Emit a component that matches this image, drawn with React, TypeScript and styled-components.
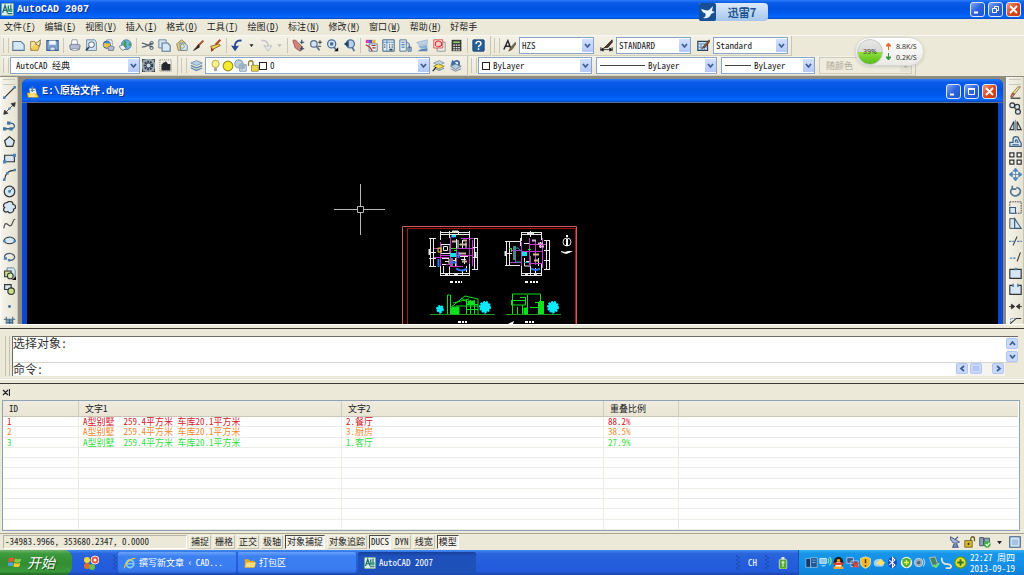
import React from 'react';
import styled, { createGlobalStyle, css } from 'styled-components';

const GlobalStyle = createGlobalStyle`
  * { box-sizing: border-box; }
  body { margin: 0; background: #ece9d8; }
  button, input, select { font: inherit; color: inherit; margin: 0; border-radius: 0; }
  button { padding: 0; border: 0; background: none; }
`;

const Page = styled.div`
  position: relative;
  display: flex;
  flex-direction: column;
  height: 100vh;
  min-height: 480px;
  overflow: hidden;
  background: #ece9d8;
  color: #1c1c1c;
  font: 9px/12px "Noto Sans Mono CJK SC", "Noto Sans CJK SC", monospace;
`;

/* ---------- title bars ---------- */

const blueBar = css`
  background: linear-gradient(#2a7cf4 0, #0a5bea 15%, #0053e0 45%, #0059ee 70%, #0668fb 90%, #0347c4 100%);
  color: #fff;
  font: bold 10px/14px "Liberation Mono", "Noto Sans CJK SC", monospace;
  text-shadow: 1px 1px 0 #0a2f86;
  display: flex;
  align-items: center;
`;

const AppBar = styled.header`
  ${blueBar}
  height: 19px;
  flex: none;
  padding: 0 3px 0 1px;
  gap: 3px;
`;

const BarTitle = styled.h1`
  margin: 0;
  flex: 1;
  font: inherit;
  white-space: pre;
`;

const WinButtons = styled.div`
  display: flex;
  gap: 3px;
`;

const WinButton = styled.button<{ $close?: boolean }>`
  width: 15px;
  height: 15px;
  border: 1px solid #dce6fb;
  border-radius: 3px;
  background: ${p => (p.$close
    ? 'linear-gradient(135deg, #f09a7c, #dc4a20 50%, #c43a12)'
    : 'linear-gradient(135deg, #7fa6f6, #2c62de 50%, #2154cc)')};
  display: grid;
  place-items: center;
`;

/* ---------- menu ---------- */

const MenuBar = styled.nav`
  flex: none;
  display: flex;
  gap: 9px;
  height: 17px;
  padding: 0 4px;
  align-items: center;
  border-bottom: 1px solid #f8f7f0;
`;

const MenuItem = styled.button`
  white-space: nowrap;
  line-height: 14px;
  u { text-underline-offset: 1px; }
`;

/* ---------- toolbars ---------- */

const ToolRow = styled.div`
  flex: none;
  display: flex;
  height: 20px;
  padding-left: 1px;
`;

const Toolbar = styled.div<{ $gap?: number }>`
  display: flex;
  align-items: center;
  gap: ${p => p.$gap || 0}px;
  padding: 0 3px 0 9px;
  position: relative;
  background: linear-gradient(#f4f2e8, #ebe8d7);
  border-right: 1px solid #c8c5b4;
  border-bottom: 1px solid #d2cfbf;
  margin-right: 1px;
  &::before {
    content: "";
    position: absolute;
    left: 2px;
    top: 2px;
    bottom: 2px;
    width: 4px;
    border: solid #cbc8b8;
    border-width: 0 1px;
  }
`;

const ToolButton = styled.button<{ $narrow?: boolean }>`
  width: ${p => (p.$narrow ? 11 : 17)}px;
  height: 17px;
  flex: none;
  display: grid;
  place-items: center;
`;

const StyleField = styled.div`
  display: flex;
  gap: 1px;
`;

const Divider = styled.i`
  width: 1px;
  height: 15px;
  margin: 0 2px;
  background: #cbc8b8;
`;

const Combo = styled.label<{ $w: number; $off?: boolean }>`
  position: relative;
  display: block;
  width: ${p => p.$w}px;
  height: 17px;
  background: ${p => (p.$off ? '#efecdd' : '#fff')};
  border: 1px solid ${p => (p.$off ? '#cfccbb' : '#8ba6c4')};
  color: ${p => (p.$off ? '#aca899' : '#1c1c1c')};
`;

const ComboSelect = styled.select<{ $pad: number }>`
  appearance: none;
  width: 100%;
  height: 15px;
  padding: 0 13px 0 ${p => p.$pad}px;
  border: 0;
  background: transparent;
  line-height: 14px;
  opacity: 1;
`;

const ComboArt = styled.span`
  position: absolute;
  left: 3px;
  top: 0;
  height: 15px;
  display: flex;
  align-items: center;
  pointer-events: none;
`;

const ComboArrow = styled.span<{ $off?: boolean }>`
  position: absolute;
  right: 0;
  top: 1px;
  width: 11px;
  height: 13px;
  background: ${p => (p.$off ? '#e6e3d4' : 'linear-gradient(#d3e0ff, #b4c9f8)')};
  display: grid;
  place-items: center;
  pointer-events: none;
`;

const Swatch = styled.i`
  width: 8px;
  height: 8px;
  border: 1px solid #222;
  background: #fff;
`;

const Stroke = styled.i<{ $w: number }>`
  width: ${p => p.$w}px;
  height: 1px;
  background: #444;
`;

/* ---------- work area ---------- */

const WorkArea = styled.main`
  flex: 1;
  min-height: 0;
  display: flex;
  border-top: 1px solid #8f8c80;
`;

const Dock = styled.aside`
  width: 18px;
  flex: none;
  overflow: hidden;
  padding-top: 7px;
  background: linear-gradient(90deg, #f6f4ec, #e6e3d2);
  border-right: 1px solid #c8c5b4;
  border-left: 1px solid #fbfaf5;
  position: relative;
  &::before {
    content: "";
    position: absolute;
    left: 2px;
    right: 2px;
    top: 2px;
    height: 4px;
    border: solid #cbc8b8;
    border-width: 1px 0;
  }
`;

const DockList = styled.div`
  display: grid;
  grid-auto-rows: 1fr;
  height: calc(100% + 7px);
  button { display: grid; place-items: center; min-height: 0; }
`;

const MdiHost = styled.div`
  flex: 1;
  min-width: 0;
  display: flex;
  padding: 2px 3px 0 4px;
  background: #8c8a82;
`;

const MdiWindow = styled.section`
  flex: 1;
  min-width: 0;
  display: flex;
  flex-direction: column;
  border: solid #0b48d2;
  border-width: 0 5px;
  border-radius: 6px 6px 0 0;
  background: #0b48d2;
`;

const MdiBar = styled.header`
  ${blueBar}
  height: 24px;
  flex: none;
  margin: 0 -5px;
  padding: 2px 6px 0 5px;
  gap: 3px;
  border-radius: 6px 6px 0 0;
  border-bottom: 1px solid #5a6f9a;
`;

const Canvas = styled.svg`
  display: block;
  flex: 1;
  min-height: 0;
  width: 100%;
  background: #000;
`;

/* ---------- command line ---------- */

const CommandArea = styled.section`
  flex: none;
  display: flex;
  padding: 7px 6px 7px 5px;
  margin-top: 4px;
  border-top: 1px solid #3c3a34;
  border-bottom: 1px solid #3c3a34;
  box-shadow: 0 -3px 0 #ece9d8, 0 -4px 0 #fff, inset 0 -3px 0 #ece9d8, inset 0 -4px 0 #fff;
  font-size: 12px;
  line-height: 12px;
  color: #333;
`;

const CommandGrip = styled.i`
  width: 5px;
  margin-right: 2px;
  border: solid #c4c1b0;
  border-width: 0 1px;
`;

const CommandBox = styled.div`
  flex: 1;
  border-left: 1px solid #6e6c64;
  border-top: 1px solid #6e6c64;
`;

const History = styled.div`
  display: flex;
  justify-content: space-between;
  height: 26px;
  background: #fff;
  border-bottom: 1px solid #d4d4d0;
`;

const Prompt = styled.div`
  display: flex;
  height: 13px;
  margin-right: 13px;
  background: #fff;
  input { flex: 1; min-width: 0; border: 0; padding: 0; background: none; outline: 0; height: 13px; }
`;

const Scroll = styled.div<{ $row?: boolean }>`
  display: flex;
  flex-direction: ${p => (p.$row ? 'row' : 'column')};
  gap: 2px;
  background: #f5f4ee;
  width: ${p => (p.$row ? 50 : 12)}px;
  padding: ${p => (p.$row ? '0 1px' : '1px 0')};
`;

const ScrollButton = styled.button<{ $end?: boolean }>`
  flex: none;
  width: 12px;
  height: 11px;
  border: 1px solid #b2c6f3;
  border-radius: 2px;
  background: #c9d8fd;
  display: grid;
  place-items: center;
  margin-left: ${p => (p.$end ? 'auto' : '0')};
`;

/* ---------- result list ---------- */

const ResultPanel = styled.section`
  flex: none;
  padding: 0 4px 2px 2px;
`;

const ClosePanel = styled.button`
  display: grid;
  place-items: center;
  width: 8px;
  height: 16px;
`;

const ListBox = styled.div`
  height: 131px;
  border: 1px solid #8fa3b8;
  background: #fff;
  padding-right: 1px;
`;

const Table = styled.table`
  width: 100%;
  height: 100%;
  table-layout: fixed;
  border-collapse: separate;
  border-spacing: 0;
  text-align: left;
  thead tr { height: 16px; }
  tbody tr { height: 10px; }
  th {
    padding: 0 0 0 6px;
    font-weight: 400;
    line-height: 14px;
    background: linear-gradient(#efecdf, #e9e6d5);
    border-right: 1px solid #d0cdbd;
    border-bottom: 1px solid #c9c6b6;
  }
  td {
    height: 10px;
    padding: 0 0 0 4px;
    line-height: 9px;
    border-right: 1px solid #ecebe6;
    border-bottom: 1px solid #ecebe6;
    white-space: pre;
  }
  th:last-child, td:last-child { border-right: 0; }
`;

const ResultRow = styled.tr<{ $color?: string }>`
  color: ${p => p.$color || 'inherit'};
`;

/* ---------- status bar ---------- */

const StatusBar = styled.footer`
  flex: none;
  display: flex;
  align-items: center;
  gap: 2px;
  height: 17px;
  padding: 0 3px;
  border-top: 1px solid #a9a698;
`;

const Coordinates = styled.output`
  width: 184px;
  height: 14px;
  padding-left: 1px;
  border: 1px solid;
  border-color: #b8b5a5 #fff #fff #b8b5a5;
`;

const Toggle = styled.button<{ $on?: boolean }>`
  height: 14px;
  padding: 0 1px;
  line-height: 12px;
  border: 1px solid;
  border-color: ${p => (p.$on ? '#4a4840 #fff #fff #4a4840' : '#f6f4ea #c4c1b1 #c4c1b1 #f6f4ea')};
  background: ${p => (p.$on ? '#f4f2ea' : 'transparent')};
`;

const StatusTray = styled.div`
  margin-left: auto;
  display: flex;
  align-items: center;
  height: 14px;
  gap: 2px;
  button { display: grid; place-items: center; width: 13px; height: 13px; }
`;

/* ---------- taskbar ---------- */

const Taskbar = styled.footer`
  flex: none;
  display: flex;
  height: 25px;
  align-items: stretch;
  color: #fff;
  background: linear-gradient(#3f8cf3 0, #2a65dc 14%, #245edb 50%, #235adb 85%, #1b45a8 100%);
`;

const StartButton = styled.button`
  width: 72px;
  display: flex;
  align-items: center;
  gap: 5px;
  padding: 0 0 2px 8px;
  border-radius: 0 8px 8px 0;
  background: linear-gradient(#6fb56c 0, #3c9a3c 15%, #338d33 55%, #3a9a3a 85%, #206a20 100%);
  font: italic 14px/20px "Noto Sans CJK SC", sans-serif;
  text-shadow: 1px 1px 1px #1c4d1c;
`;

const QuickLaunch = styled.div`
  display: flex;
  align-items: center;
  justify-content: space-between;
  width: 42px;
  margin-left: 3px;
  padding-left: 8px;
`;

const TaskButton = styled.button<{ $active?: boolean }>`
  flex: 0 1 118px;
  height: 21px;
  margin: 2px 1px 0;
  padding: 0 6px;
  display: flex;
  align-items: center;
  gap: 3px;
  border-radius: 2px;
  white-space: nowrap;
  background: ${p => (p.$active
    ? 'linear-gradient(#173f9c, #1e51bb 20%, #1e50b8)'
    : 'linear-gradient(#6aa3fa, #3c80f2 20%, #3a7cf0 85%, #2f68d6)')};
`;

const Language = styled.div`
  margin-left: auto;
  display: flex;
  align-items: center;
  gap: 8px;
  width: 62px;
`;

const Tray = styled.div`
  flex: 0 0 226px;
  display: flex;
  align-items: center;
  padding-left: 6px;
  background: linear-gradient(#35b3f4 0, #1795e8 14%, #128fe6 60%, #0f7fd4 100%);
  border-left: 1px solid #1b52a8;
`;

const TrayIcons = styled.div`
  display: flex;
  flex: 1;
  justify-content: space-between;
  padding-right: 3px;
  button { width: 13px; height: 16px; display: grid; place-items: center; }
`;

const Clock = styled.time`
  width: 54px;
  line-height: 11px;
  white-space: pre;
`;

/* ---------- floating widgets ---------- */

const ThunderBadge = styled.a`
  position: absolute;
  top: 3px;
  right: 256px;
  width: 69px;
  height: 18px;
  display: flex;
  align-items: center;
  border-radius: 2px 4px 4px 2px;
  background: linear-gradient(#dbe9fb, #a5c6ee);
  color: #1f5390;
  font: bold 11px/16px "Noto Sans CJK SC", sans-serif;
  text-decoration: none;
  span { flex: 1; text-align: center; }
`;

const NetMonitor = styled.aside`
  position: absolute;
  top: 37px;
  right: 100px;
  width: 69px;
  height: 29px;
  display: flex;
  align-items: center;
  gap: 3px;
  padding-left: 1px;
  border-radius: 15px;
  background: linear-gradient(#fff, #e9e9e6);
  border: 1px solid #d8d8d2;
  box-shadow: 0 1px 3px #8885;
  font: 7px/11px "Noto Sans", sans-serif;
  color: #333;
`;

const Gauge = styled.div`
  width: 26px;
  height: 26px;
  border-radius: 50%;
  border: 1px solid #c4c8c0;
  background: linear-gradient(#e9e9e9 0, #d8d9d6 48%, #8fe33c 50%, #58b81c 100%);
  display: grid;
  place-items: center;
`;

const Speeds = styled.div`
  div { display: flex; align-items: center; gap: 5px; white-space: nowrap; }
`;

/* ---------- icon drawings (16 unit grid) ---------- */

const D = '#24425f';
const B = '#4f86b8';
const L = '#d5e6f5';

const icons: Record<string, React.ReactNode> = {
  cad: <><rect width="16" height="16" fill="#d9efe9" /><path d="M0 0h16v16H0z" fill="none" stroke="#2d6a6a" strokeWidth="1.5" /><path d="M2 12 5 3l3 9M3.500 9h3M9 3v7M12 2v9M8 13h6" stroke="#1f6c6c" strokeWidth="1.600" fill="none" /><path d="M9 7h5v4H9z" fill="#3aa089" /></>,
  dwg: <><path d="M0 9h12l4 6H1z" fill="#f5c62c" stroke="#8d6c10" strokeWidth=".6" /><path d="M3 3h8l2 7H4z" fill="#e9eef4" /><path d="M7 0v8M3 3h8M5 6h5" stroke="#5b86b6" strokeWidth="1.600" /><path d="M4 10c3-3 6 3 9 3v2H2z" fill="#ffe27a" /></>,
  new: <path d="M1 3h10l4 4v7H1z" fill={L} stroke="#58788f" strokeWidth="1.300" />,
  open: <><path d="M2 14 5 5h9l-3 9z" fill="#f3cf5b" stroke="#96762a" /><path d="M2 13V3h5l1 2" fill="#f8e6a4" stroke="#96762a" /><path d="M8 6l6-5-1 8z" fill="#fbf3cf" stroke="#7b6426" /></>,
  save: <><path d="M1 2h14v12H1z" fill="#7fa5cf" stroke="#3d5f8b" strokeWidth="1.300" /><path d="M4 2h8v5H4z" fill="#f1f6fb" /><path d="M5 10h6v4H5z" fill="#dfe7f1" stroke="#3d5f8b" strokeWidth=".7" /></>,
  print: <><path d="M4 7 5 1h6l1 6" fill="#fff" stroke="#7b8797" /><path d="M2 8c0-2 12-2 13 0l-1 5H3z" fill="#b6bdd2" stroke="#626b85" /><path d="M5 12h7v2H5z" fill="#fff" stroke="#626b85" strokeWidth=".7" /></>,
  preview: <><path d="M2 1h10l2 3v10H2z" fill={L} stroke="#58788f" /><circle cx="8" cy="7" r="3.500" fill="#fff" stroke={D} /><path d="m5 10-4 4" stroke={D} strokeWidth="2" /></>,
  publish: <><path d="M4 6 6 1h6l1 6" fill="#fff" stroke="#7b8797" /><circle cx="6" cy="7" r="4.500" fill="#4d93d8" stroke="#2d5a94" /><path d="M2 6c2-2 5 1 8-1v5c-2 2-5 1-8-1z" fill="#f0c434" /><path d="M7 10c1-2 7-2 8 0l-1 4H8z" fill="#b6bdd2" stroke="#626b85" /></>,
  globe: <><circle cx="9" cy="7" r="6" fill="#6fb4e6" stroke="#42688c" /><path d="M6 3c3-2 4 1 3 3s2 3 0 5c-3 0-4-4-3-8zM12 4l3 3-3 2z" fill="#3da04a" /><path d="m0 9 5-2 4 5-5 2z" fill="#eef4fa" stroke="#58788f" /></>,
  cut: <><path d="M1 5c4 0 7 3 13 5M1 10c5 0 8-3 13-5" stroke="#5b6470" strokeWidth="1.500" fill="none" /><circle cx="13" cy="5" r="2" fill="none" stroke={D} /><circle cx="13" cy="11" r="2" fill="none" stroke={D} /></>,
  copy: <><path d="M1 1h9v10H1z" fill={L} stroke="#58788f" /><path d="M5 5h7l3 3v7H5z" fill={L} stroke="#58788f" strokeWidth="1.300" /></>,
  paste: <><path d="M2 6 8 1l5 4-1 9H4z" fill="#e0cb8c" stroke="#8e7a43" /><path d="M6 5h6l3 3v6H7z" fill={L} stroke="#58788f" /><circle cx="9" cy="9" r="2.500" fill="none" stroke="#8e9a53" /></>,
  brush: <><path d="M14 2 7 9" stroke="#a2542d" strokeWidth="2.500" /><path d="M8 7 2 14l7-4z" fill="#2b2523" stroke="#2b2523" /></>,
  match: <><path d="m2 9 10-3 2 2-10 5z" fill="#f6d44a" stroke="#6b5320" /><path d="m14 1-6 6" stroke="#b64923" strokeWidth="2.500" /><path d="M3 11v4l3-2" fill="#bb4822" stroke="#76310f" /></>,
  undo: <><path d="M13 2C7 1 4 5 5 10" fill="none" stroke="#27488f" strokeWidth="2.300" /><path d="M0 8l5 7 5-7-4 1z" fill="#27488f" /></>,
  redo: <><path d="M3 2c6-1 9 3 8 8" fill="none" stroke="#c3c4c6" strokeWidth="2" /><path d="M16 8l-5 7-5-7 4 1z" fill="#e8e8e6" stroke="#b9babd" /></>,
  caret: <path d="M5 6h6L8 10z" fill="#222" />,
  caretOff: <path d="M5 6h6L8 10z" fill="#b9b7ab" />,
  pan: <><path d="M1 2c3-2 5 1 7 3l5 5-3 5-6-4z" fill="#d4837c" stroke="#8e4b49" /><path d="M12 1v5M10 4h5M12 9v5M15 12h-5" stroke={D} strokeWidth="1.300" /></>,
  zoom: <><circle cx="6" cy="6" r="4" fill={L} stroke="#587089" strokeWidth="1.500" /><path d="m9 9 4 5" stroke="#587089" strokeWidth="2" /><path d="M11 4h5M13.500 1.500v5M11 9h4" stroke="#222" /></>,
  zoomWin: <><circle cx="7" cy="6" r="5" fill={L} stroke="#466a92" strokeWidth="1.500" /><path d="M5 4h4v4H5z" fill="#4e6f93" /><path d="m10 10 2 3" stroke="#466a92" strokeWidth="2" /><path d="M15 10v5h-5z" fill="#111" /></>,
  zoomPrev: <><circle cx="9" cy="6" r="5" fill="#b8d2ea" stroke="#466a92" strokeWidth="1.500" /><path d="M1 6l6-4v8z" fill="#24425f" /><path d="m11 10 3 5" stroke="#466a92" strokeWidth="2" /></>,
  props: <><path d="M1 1h4v4H1z" fill="#e33aa8" /><path d="M5 1h4v4H5z" fill="#3a60e3" /><path d="M9 1h4v4H9z" fill="#f0b32a" /><path d="M5 6h10v9H5z" fill="#e6eef6" stroke="#5b6f8a" /><path d="m1 7 5 3 3 5M8 8h5M9 11h4" stroke="#a63b3b" strokeWidth="1.500" fill="none" /></>,
  design: <><path d="M1 1h14v14H1z" fill="#e4eef6" stroke={D} /><path d="M6 1v14M1 4h14" stroke={B} /><path d="M3 7h1M3 10h1M9 7h1M12 7h1M9 10h1M12 10h1M9 13h4" stroke={D} strokeWidth="2" /></>,
  palette: <><path d="M1 1h8v14H1z" fill="#dfeaf5" stroke="#4a6a8e" /><path d="M3 4h4M3 7h4M3 10h4" stroke={B} strokeWidth="1.500" /><path d="M9 4c5 0 4 5 4 9M11 10h4v5h-4z" stroke="#3d5b82" fill="#b9cce2" /></>,
  sheets: <><path d="M1 4 14 1v5L4 8z" fill="#b9d3ea" stroke="#88a" strokeWidth=".5" /><path d="m3 9 11-2v4L6 12z" fill="#8ab2d6" /><path d="m5 13 9-2v4H2z" fill="#5788b7" /></>,
  markup: <><path d="M5 4h10v11H5z" fill="#eee" stroke="#888" /><path d="M1 1h11v10H1z" fill="#fff" stroke="#c33" /><path d="M3 4c2-2 6-2 7 0s1 4-1 5-5 0-6-1 1-3 0-4z" fill="#f7c9c9" stroke="#d22c2c" strokeWidth="1.300" /></>,
  calc: <><path d="M2 1h12v14H2z" fill="#3a3a3a" /><path d="M4 3h8v2H4z" fill="#8fd06a" /><path d="M4 7.500h8M4 10.500h8M4 13.500h8" stroke="#f1f1f1" strokeWidth="1.500" strokeDasharray="2 1" /></>,
  help: <><rect x="1" y="1" width="14" height="14" rx="1" fill="#275f9a" stroke="#173c66" /><path d="M5 6c0-4 6-4 6-.5C11 8 8 8 8 10M8 11.500v2" stroke="#fff" strokeWidth="1.800" fill="none" /></>,
  textStyle: <><path d="M1 13 6 2l4 11M3 9h5" stroke="#222" strokeWidth="1.700" fill="none" /><path d="m15 4-6 7-2 4 4-2 5-7z" fill="#7c6a50" stroke="#3b3222" strokeWidth=".6" /></>,
  dimStyle: <><path d="M15 1 8 8l-3 3 5-1 5-6z" fill="#4b3a29" stroke="#2a2118" /><path d="M1 13h14M1 10v5M15 10v5M1 13l3-2v4zM15 13l-3-2v4z" stroke="#222" fill="#222" /></>,
  tableStyle: <><path d="M1 3h12v11H1z" fill="#cfe0f1" stroke={D} strokeWidth="1.400" /><path d="M1 6h12M5 6v8M9 6v8M1 10h12" stroke={B} /><path d="m15 1-7 8-2 3 4-2 6-7z" fill="#8f5133" stroke="#402111" strokeWidth=".6" /></>,
  gear: <><path d="M0 0h16v16H0z" fill="#9aa7b3" /><path d="M0 4V0h4M12 0h4v4M16 12v4h-4M4 16H0v-4" stroke="#222" strokeWidth="1.500" fill="none" /><circle cx="8" cy="8" r="4.500" fill="none" stroke="#2c3d4d" strokeWidth="3" strokeDasharray="2 1.200" /><circle cx="8" cy="8" r="3" fill="#cbd6df" stroke="#2c3d4d" /></>,
  myspace: <><path d="M1 1h14v14H1z" fill="none" stroke="#555" strokeDasharray="1 1.500" /><path d="M3 7 6 4h2V2l3 4h3v8H3z" fill="#26282b" /></>,
  layers: <><path d="m1 5 7-3 7 3-7 3z" fill="#b9cfe2" stroke="#6f8fb0" /><path d="m1 8 7 3 7-3M1 11l7 3 7-3" fill="none" stroke="#6f8fb0" strokeWidth="1.700" /></>,
  layerPrev: <><path d="m2 5 7-3 6 3-7 3z" fill="#c3d3e2" stroke="#7893ad" /><path d="m2 9 6-3 7 3-7 3z" fill="#f6e04a" stroke="#8e8030" /><path d="M4 12l5 2 6-3" fill="none" stroke="#7893ad" strokeWidth="1.500" /><path d="M1 15l4-5" stroke="#222" strokeWidth="1.500" /></>,
  layerState: <><path d="m2 9 6-3 7 3-7 4z" fill="#b7cbe0" stroke="#55708e" /><path d="m2 12 6 3 7-3" fill="none" stroke="#55708e" /><path d="M12 8c2-6-3-7-6-4" fill="none" stroke="#3c6aa2" strokeWidth="2.200" /><path d="M9 6 2 8l2-7z" fill="#3c6aa2" /></>,
  bulb: <><circle cx="8" cy="6" r="4.500" fill="#fdf28a" stroke="#a9983c" /><path d="M6 11h4v4H6z" fill="#a8a8a0" /></>,
  sun: <circle cx="8" cy="8" r="6.500" fill="#f4ec2c" stroke="#98902a" strokeWidth="1.500" />,
  freeze: <><circle cx="6" cy="6" r="5" fill="#bcd0de" stroke="#6e8698" /><path d="M7 7h8v8H7z" fill="#dde9f0" stroke="#6e8698" /><circle cx="10" cy="9" r="4" fill="#9ab2c4" /></>,
  lock: <><path d="M2 8V4c0-4 6-4 6 0v3" fill="none" stroke="#8b7f34" strokeWidth="1.800" /><path d="M6 7h9v8H6z" fill="#e9d74c" stroke="#8b7f34" /></>,
  line: <><path d="m2 14 12-12" stroke="#333" strokeWidth="1.500" /><path d="M0 13h3v3H0zM13 0h3v3h-3z" fill={B} /></>,
  xline: <><path d="M1 15 15 1M1 15l1-5 4 4zM15 1l-5 1 4 4z" stroke="#333" fill="#333" /><circle cx="8" cy="8" r="1.500" fill={B} /></>,
  pline: <><path d="M1 12h9c6 0 5-7-1-7H7" stroke="#3a6488" strokeWidth="1.600" fill="none" /><path d="M0 10h4v4H0zM8 10h4v4H8zM5 3h4v4H5z" fill="#3f76a4" /></>,
  polygon: <path d="m8 2 6 5-2 7H4L2 7z" fill={L} stroke="#333" strokeWidth="1.500" />,
  rect: <><path d="M2 4h12v8H2z" fill={L} stroke="#333" strokeWidth="1.400" /><path d="M0 10h4v4H0zM12 2h4v4h-4z" fill={B} /></>,
  arc: <><path d="M2 14C3 7 7 3 14 3" stroke="#333" fill="none" strokeWidth="1.400" /><path d="M0 13h3v3H0zM4 5h3v3H4zM13 1h3v3h-3z" fill={B} /></>,
  circle: <><circle cx="8" cy="8" r="6.500" fill={L} stroke="#333" strokeWidth="1.500" /><path d="m8 8 4-4" stroke="#333" /><circle cx="8" cy="8" r="1.800" fill={B} /></>,
  cloud: <path d="M5 2c3-3 8-1 7 2 5 1 4 6 1 6 1 4-5 6-7 3-4 2-7-2-4-5-3-2-1-6 3-6z" fill={L} stroke="#333" strokeWidth="1.500" />,
  spline: <path d="M1 14C3 0 8 16 11 9S13 3 15 3" stroke="#555" strokeWidth="1.500" fill="none" />,
  ellipse: <><ellipse cx="8" cy="8" rx="6.500" ry="4" fill={L} stroke="#333" strokeWidth="1.500" /><path d="M0 7h3v3H0zM13 7h3v3h-3zM7 3h3v2H7z" fill={B} /></>,
  ellArc: <><path d="M3 11C-1 5 8 2 13 6c4 4-2 8-6 6" fill="none" stroke="#4a6076" strokeWidth="1.600" /><path d="M1 9h4v3H1zM6 11h3v3H6z" fill={B} /></>,
  insert: <><path d="M5 1h8l2 3v7H5z" fill={L} stroke="#58788f" /><path d="M2 5h8v7H2z" fill="#c9e08a" stroke="#333" strokeWidth="1.300" /><circle cx="9" cy="11" r="3.500" fill="#d8ecb0" stroke="#333" strokeWidth="1.300" /><path d="M16 11v5h-5z" fill="#111" /></>,
  block: <><path d="M2 2h8v6H2z" fill={L} stroke="#333" strokeWidth="1.400" /><circle cx="10" cy="10" r="4" fill="#c9e08a" stroke="#333" strokeWidth="1.400" /></>,
  point: <circle cx="8" cy="8" r="1.800" fill="#3f76a4" />,
  hatch: <path d="M1 4h14M1 12h14M4 1v14M12 1v14M5 6h7M5 8h7M5 10h7M8 4v8" stroke="#3f6585" strokeWidth="1.300" />,
  erase: <><path d="m14 1-7 9-3-1 7-8z" fill="#f1e4a0" stroke="#7d6f35" /><path d="m7 10-3-1-2 4 2 1z" fill="#d67c6a" stroke="#7d3f35" /><path d="M2 15h12" stroke="#333" strokeWidth="1.500" /></>,
  copyObj: <><circle cx="4" cy="4" r="3" fill={L} stroke="#333" strokeWidth="1.400" /><circle cx="10" cy="6" r="3" fill={L} stroke="#333" strokeWidth="1.400" /><circle cx="11" cy="12" r="3" fill={L} stroke="#333" strokeWidth="1.400" /></>,
  mirror: <><path d="M6 3v10H1zM10 3v10h5z" fill={L} stroke="#333" strokeWidth="1.400" /><path d="M8 1v14" stroke={B} /></>,
  offset: <><path d="M1 14V9h4V5c0-4 7-4 7 0l3 5v4z" fill={L} stroke="#3a5a7a" strokeWidth="1.400" /><path d="M4 12h8M8 9c-1-4 3-4 2 0h2" fill="none" stroke="#3a5a7a" strokeWidth="1.300" /></>,
  array: <path d="M1 1h5v5H1zM10 1h5v5h-5zM1 10h5v5H1zM10 10h5v5h-5z" fill="#f4f4f0" stroke="#333" strokeWidth="1.500" />,
  move: <path d="M8 2v12M2 8h12M8 0 5 4h6zM8 16l-3-4h6zM0 8l4-3v6zM16 8l-4-3v6z" fill={B} stroke={B} />,
  rotate: <path d="M4 4c-5 6 1 11 6 9s6-9-1-10M4 1v4h5" fill="none" stroke="#527596" strokeWidth="2" />,
  scale: <><path d="M1 1h14v14H1z" fill="none" stroke="#333" strokeDasharray="2 1" /><path d="M1 8h7v7H1z" fill={L} stroke="#3a5a7a" strokeWidth="1.300" /></>,
  stretch: <><path d="M1 2h6v12H1z" fill={L} stroke="#333" /><path d="m7 2 8 12H7z" fill={L} stroke="#3a5a7a" strokeWidth="1.300" /></>,
  trim: <><path d="M0 9h6M10 9h6" stroke={B} strokeWidth="1.500" strokeDasharray="3 1" /><path d="M5 14 10 3" stroke="#333" strokeWidth="1.300" /></>,
  extend: <><path d="M1 10h8" stroke={B} strokeWidth="1.500" strokeDasharray="3 1" /><path d="m10 14 4-11" stroke="#333" strokeWidth="1.300" /></>,
  breakPt: <><path d="M1 3h14v11H1z" fill={L} stroke="#333" strokeWidth="1.400" /><path d="M7 1h3v3H7z" fill={B} /></>,
  breakObj: <><path d="M5 3H1v11h14V3h-4" fill={L} stroke="#333" strokeWidth="1.400" /><path d="M4 1h2v4H4zM10 1h2v4h-2z" fill={B} /></>,
  join: <path d="M0 8h6M10 8h6M7 8 3 5v6zM9 8l4-3v6z" fill="#333" stroke="#333" />,
  chamfer: <><path d="M2 15V9l7-6h6" fill="none" stroke="#333" strokeWidth="1.300" /><path d="M2 8V3h6" fill="none" stroke={B} strokeDasharray="2 1" /></>,
  flag: <><path d="M1 4c3-2 4-1 6 0L6 8C4 7 3 7 0 8z" fill="#f0562a" /><path d="M8 4c3 1 4 1 7 0l-1 4c-3 1-4 1-7 0z" fill="#8ccc3c" /><path d="M0 9c3-1 4-1 6 0l-1 4c-2-1-3-1-6 0z" fill="#4aa2f0" /><path d="M7 9c3 1 4 1 7 0l-1 4c-3 1-4 1-7 0z" fill="#f8ca32" /></>,
  quick: <><circle cx="4" cy="5" r="3" fill="#f5d63a" /><circle cx="4" cy="11" r="3" fill="#e86a2a" /><circle cx="9" cy="12" r="3" fill="#6ac04a" /><circle cx="12" cy="5" r="4" fill="#e8563a" stroke="#f7e6dc" /><circle cx="12" cy="5" r="1.500" fill="#fff" /></>,
  ie: <><circle cx="8" cy="9" r="5" fill="none" stroke="#7fd0fa" strokeWidth="2.500" /><path d="M4 9h9" stroke="#7fd0fa" strokeWidth="1.800" /><path d="M1 15C-1 11 9 1 15 2" fill="none" stroke="#f3c634" strokeWidth="1.500" /></>,
  folder: <><path d="M1 3h5l2 2h6v9H1z" fill="#e0ac30" /><path d="M3 7h13l-2 7H1z" fill="#fbe07c" stroke="#c38e20" strokeWidth=".5" /></>,
  dish: <><path d="M2 1c-1 7 6 11 12 7z" fill="#a8b8d6" stroke="#465a88" strokeWidth="1.300" /><path d="m8 5 4-4M7 10l-2 5h7l-2-5" stroke="#465a88" strokeWidth="1.500" fill="#7f92bc" /></>,
  padlock: <><path d="M9 7V4c0-4 5-4 5 0v3" fill="none" stroke="#6a5a1a" strokeWidth="1.700" /><path d="M1 6h10v9H1z" fill="#d6b42c" stroke="#6a5a1a" /><path d="M6 9v3" stroke="#3a300a" strokeWidth="2" /></>,
  plotOk: <><path d="M1 2h5v11H1zM7 3h7v10H7z" fill="#8fa4b4" stroke="#455b6c" strokeWidth="1.300" /><circle cx="11" cy="11" r="4.500" fill="#43b04a" /><path d="m9 11 2 2 3-4" stroke="#fff" fill="none" strokeWidth="1.500" /></>,
  clean: <><path d="M1 1h14v14H1z" fill="#c8dcf0" stroke="#3d5f8b" strokeWidth="1.500" /><path d="M3 4h10v9H3z" fill="#a2c3e3" stroke="#fff" strokeWidth=".7" /></>,
  usb: <><rect x="3" y="3" width="10" height="13" rx="2" fill="#56a832" stroke="#dcefd0" /><path d="M6 0h4v3H6z" fill="#e9e9e9" /><path d="M8 6v7M6 8l2-2 2 2" stroke="#fff" strokeWidth="1.300" fill="none" /></>,
  t1: <><path d="M1 3h6v11H1z" fill="#123a6c" stroke="#bfe0f8" strokeWidth=".7" /><path d="M7 2h8v12H7z" fill="#1f5590" stroke="#bfe0f8" strokeWidth=".7" /><path d="M9 5h4M9 8h4" stroke="#8cc6f0" /></>,
  t2: <><path d="M1 3h8v6H1zM3 12h5" fill="#8cc6f0" stroke="#e3f2fb" /><path d="M11 3q2 3 0 6M13 1q4 5 0 10" stroke="#8ff08a" fill="none" strokeWidth="1.300" /></>,
  t3: <><ellipse cx="8" cy="8" rx="6" ry="7" fill="#1b1b1b" /><ellipse cx="8" cy="11" rx="4" ry="4" fill="#fff" /><path d="M2 8h12v3H2z" fill="#e23a22" /><path d="M6 4h4v3H6zM2 13h12v3H2z" fill="#f5a423" /></>,
  t4: <><path d="M1 2h8v7H1zM6 6h9v7H6z" fill="#34568c" stroke="#bcd0ea" /><path d="m9 8 6 6M15 8l-6 6" stroke="#e8402a" strokeWidth="2.200" /></>,
  t5: <><path d="M8 1l6 2v5c0 4-3 6-6 7-3-1-6-3-6-7V3z" fill="#f4b92c" stroke="#fae6b0" /><path d="M8 4v5M8 11v2" stroke="#553a00" strokeWidth="1.800" /></>,
  t6: <><path d="M1 8c0-4 7-6 10-3s4 7 0 8H5C2 13 1 11 1 8z" fill="#9fd2f4" /><path d="m4 9 6-6 3 4 2 1-5 4z" fill="#fae26a" /></>,
  t7: <><ellipse cx="8" cy="8" rx="5.500" ry="7" fill="#1c49c0" /><path d="m4 5 7 6-3 3V2l3 3-7 6" stroke="#fff" fill="none" strokeWidth="1.300" /></>,
  t8: <><circle cx="8" cy="8" r="7" fill="#eef6dd" /><path d="M8 2l5 2v4c0 3-2 5-5 6-3-1-5-3-5-6V4z" fill="#4fae38" /><path d="M5 8h6M8 5v6" stroke="#f6ec5a" strokeWidth="1.600" /></>,
  t9: <><circle cx="7" cy="8" r="5" fill="#93a8b8" stroke="#dfe8ef" /><circle cx="7" cy="8" r="2" fill="#4b6274" /><path d="M13 3q3 5 0 10" stroke="#dfe8ef" fill="none" /></>,
  t10: <><path d="m3 2 7-1 3 9-6 3z" fill="#4d7f60" stroke="#bed8c6" /><path d="m8 11 3 3 4-5" stroke="#6be35a" strokeWidth="2" fill="none" /></>,
  t11: <path d="M2 2c0 7 3 8 7 8 5 0 6 4 3 5H7" stroke="#e7e3d2" strokeWidth="2.200" fill="none" />,
  t12: <><circle cx="8" cy="8" r="7" fill="#ecdc2e" stroke="#4d9a2c" strokeWidth="1.500" /><path d="M8 4v8M4 8h8" stroke="#2b7a22" strokeWidth="2.300" /></>,
};

const Icon = ({ name, size = 13 }: { name: string; size?: number }) => (
  <svg width={size} height={size} viewBox="0 0 16 16" aria-hidden="true">{icons[name]}</svg>
);

const Chevron = ({ d, color = '#3c5c94' }: { d: string; color?: string }) => (
  <svg width="7" height="7" viewBox="0 0 7 7" aria-hidden="true">
    <path d={d} fill="none" stroke={color} strokeWidth="1.700" />
  </svg>
);

const DOWN = 'M1 2l2.500 3L6 2';
const UP = 'M1 5l2.500-3L6 5';
const LEFT = 'M5 1L2 3.500 5 6';
const RIGHT = 'M2 1l3 2.500L2 6';

const Tools = ({ names }: { names: string[] }) => (
  <>
    {names.map((n, i) => (n === '|'
      ? <Divider key={i} />
      : <ToolButton key={i} aria-label={n} $narrow={n.startsWith('caret')}><Icon name={n} size={n.startsWith('caret') ? 11 : 13} /></ToolButton>))}
  </>
);

type DropProps = { label: string; value: string; w: number; pad?: number; art?: React.ReactNode; off?: boolean };

const Drop = ({ label, value, w, pad = 2, art, off }: DropProps) => (
  <Combo $w={w} $off={off}>
    {art && <ComboArt>{art}</ComboArt>}
    <ComboSelect $pad={pad} aria-label={label} disabled={off} defaultValue={value}>
      <option>{value}</option>
    </ComboSelect>
    <ComboArrow $off={off}><Chevron d={DOWN} color={off ? '#b9b6a6' : undefined} /></ComboArrow>
  </Combo>
);

const WindowControls = ({ restore }: { restore?: boolean }) => (
  <WinButtons>
    <WinButton aria-label="最小化"><svg width="11" height="11"><path d="M2 8.500h4" stroke="#fff" strokeWidth="2" /></svg></WinButton>
    <WinButton aria-label={restore ? '还原' : '最大化'}>
      <svg width="11" height="11" fill="none" stroke="#fff">
        {restore ? <path d="M4.500 4V2.500h4v4H7M2.500 4.500h4v4h-4z" /> : <path d="M2 2.500h7M2.500 2v6.500h6V2M2 3.500h7" />}
      </svg>
    </WinButton>
    <WinButton $close aria-label="关闭"><svg width="11" height="11"><path d="m2 2 7 7M9 2 2 9" stroke="#fff" strokeWidth="1.800" /></svg></WinButton>
  </WinButtons>
);

/* ---------- the drawing in model space ---------- */

const Tree = ({ x, y, r }: { x: number; y: number; r: number }) => (
  <g stroke="#00f0ff">
    <circle cx={x} cy={y} r={r - 1} fill="#12e6f4" strokeWidth="2" strokeDasharray="2 1" />
    <path d={`M${x} ${y}V314`} />
  </g>
);

const Drawing = () => (
  <Canvas role="img" aria-label="别墅施工图">
    <g transform="translate(-27 -103)" fill="none" strokeWidth="1">
      <path d="M334 209.500h23M363 209.500h22M360.500 184v23M360.500 212v23M357.500 206.500h6v6h-6z" stroke="#b8b8b8" />
      <path d="M402.500 326V226.500h174V326" stroke="#c9605c" />
      <path d="M407.500 326V228.500h168V326" stroke="#a81414" />

      <g stroke="#e8e8e8">
        <path d="M440 232.500h30M440 234.500h30M440.500 231v9M449.500 231v7M458.500 231v4M469.500 231v9M430.500 238v29M433.500 238v29M429 238.500h7M429 252.500h7M429 258.500h7M429 266.500h7M477.500 238v32M474.500 238v32M472 238.500h6M472 247.500h6M472 257.500h6M472 269.500h6M440 273.500h30M440 275.500h30M440.500 264v12M443.500 266v8M449.500 266v10M462.500 270v6M466.500 266v6M469.500 262v14" />
        <path d="M441 244.500h9v9h-9zM443.500 246.500h4v4h-4zM442 258.500h7v6h-7M445 261.500h4M452 258v8M455.500 258v8M453 260.500h3M456.500 239v9M458 240v8M462.500 240v8M464.500 256v8M460 256.500h8M461 259.500h5M466 242v6" />
        <path d="M452 231.500h6M445 274.500h3M454 274.500h4" strokeWidth="2" />
        <path d="M429.500 249v6M475.500 252v6" strokeWidth="2" />
      </g>
      <path d="M440.500 242v24M440 255.500h33M450.500 237v30M456.500 249v17M469.500 240v24M472.500 240v26M434 257.500h15M456 248.500h18M449 266.500h14M461 238.500h13M434 248.500h7M446 264.500h6" stroke="#c238c8" />
      <path d="M451 236.500h5M438.500 259v8M456 268.500q6 4 11 0M451 262.500h5M458.500 252v6" stroke="#2a7cf0" strokeWidth="2" />
      <path d="M450 253h6v4h-6zM452 235h4v2h-4z" fill="#18e0e8" />
      <path d="M451 248.500h6M454 250.500h3M458 244.500h3" stroke="#35d82e" />
      <path d="M438 248h3v4h-3z" stroke="#f0e020" />
      <path d="M459 253.500h7M462 261.500h5M460 244.500h7M463 240.500h4M452 241.500h4" stroke="#d8b0a4" strokeWidth="2" />
      <path d="M450 282h3M455 282h2M458 282h2M461 282h1" stroke="#fff" strokeWidth="2" />

      <g stroke="#e8e8e8">
        <path d="M521 232.500h21M521 234.500h21M521.500 232v9M530.500 231v6M541.500 232v8M506.500 241v25M509.500 241v25M505 241.500h15M505 253.500h7M505 265.500h15M549.500 240v30M546.500 240v30M544 240.500h6M544 250.500h6M544 260.500h6M544 269.500h6M521 273.500h21M521 275.500h21M521.500 262v14M530.500 266v10M535.500 268v5M541.500 264v12" />
        <path d="M524 243.500h5M530 256v10M524.500 258v8h5M526 261.500h4M535.500 256v8M538.500 258v8M540.500 242v6M514 246v14M520.500 238v8" />
        <path d="M527 233.500h7M525 274.500h3M534 274.500h3" strokeWidth="2" />
        <path d="M505.500 251v5" strokeWidth="2" />
      </g>
      <path d="M521.500 242v24M521 251.500h22M529.500 238v29M535.500 241v24M542.500 238v30M530 244.500h16M530 263.500h12M512 250.500h8M510 262.500h12" stroke="#c238c8" />
      <path d="M532 240.500h4M539 246.500h5M538 243.500h5" stroke="#e8a8e4" strokeWidth="2" />
      <path d="M513 248h5l4 4M515.500 246v16h5M524 262.500h5" stroke="#1898a8" />
      <path d="M531 268.500q5 3 9 0" stroke="#2a7cf0" strokeWidth="2" />
      <path d="M522 252h5v4h-5z" fill="#18e0e8" />
      <path d="M509 248.500h3M511.500 248v4M528 249.500h3" stroke="#35d82e" />
      <path d="M533 254.500h6M534 260.500h5" stroke="#d8b88c" strokeWidth="2" />
      <path d="M525 282h3M530 282h2M533 282h2M536 282h2" stroke="#fff" strokeWidth="2" />

      <circle cx="567" cy="242" r="4" stroke="#ddd" />
      <path d="M567 235v2M567 239v7" stroke="#fff" strokeWidth="2" />
      <path d="m561 251 4 1 3-1 5 0-4 2-3 1-5-2z" fill="#fff" />

      <g stroke="#0fe01e">
        <path d="M430 314.500h65M506 314.500h55" stroke="#1a9a22" />
        <path d="M447.500 314v-19h3v19M450 308l15-12 13 3v15M453 303l16-4M456 306h22M451.500 314v-6M466.500 300v14M470.500 300v14M474.500 300v14M466 304.500h12M466 309.500h12M461 298l6 4" />
        <path d="M452 307h7v7h-7zM468 301h6v3h-6z" fill="#0fe01e" />
        <path d="M512.500 305v-11h28v8M511 300.500h14M511.500 300v5h14v-8M520 297.500h6M512.500 305v9M517.500 307v7M522.500 305v9M527.500 295v19M530 307.500h12M538.500 303v11M535 302.500h8" />
        <path d="M539 301h5v13h-5z" fill="#0fe01e" strokeWidth="0" />
        <path d="M524 308h3v6h-3z" fill="#0fe01e" />
      </g>
      <Tree x={440} y={309} r={4} />
      <Tree x={485} y={307} r={6} />
      <Tree x={553} y={307} r={6} />
      <path d="M458 322h3M462 322h2M465 322h2M525 322h3M529 322h2M532 322h2" stroke="#fff" strokeWidth="2" />
      <path d="m508 324 6-3-1 3z" fill="#fff" />
    </g>
  </Canvas>
);

/* ---------- data ---------- */

const menus = [['文件', 'F'], ['编辑', 'E'], ['视图', 'V'], ['插入', 'I'], ['格式', 'O'], ['工具', 'T'], ['绘图', 'D'], ['标注', 'N'], ['修改', 'M'], ['窗口', 'W'], ['帮助', 'H'], ['好帮手', '']];

const standard = ['new', 'open', 'save', '|', 'print', 'preview', 'publish', 'globe', '|', 'cut', 'copy', 'paste', 'brush', 'match', '|', 'undo', 'caret', 'redo', 'caretOff', '|', 'pan', 'zoom', 'zoomWin', 'zoomPrev', '|', 'props', 'design', 'palette', 'sheets', 'markup', 'calc', '|', 'help'];
const drawTools = ['line', 'xline', 'pline', 'polygon', 'rect', 'arc', 'circle', 'cloud', 'spline', 'ellipse', 'ellArc', 'insert', 'block', 'point', 'hatch'];
const modifyTools = ['erase', 'copyObj', 'mirror', 'offset', 'array', 'move', 'rotate', 'scale', 'stretch', 'trim', 'extend', 'breakPt', 'breakObj', 'join', 'chamfer'];

const unit = 'A型别墅  259.4平方米 车库20.1平方米';
const results = [
  { id: '1', a: unit, b: '2.餐厅', ratio: '88.2%', color: '#d2202c' },
  { id: '2', a: unit, b: '3.厨房', ratio: '38.5%', color: '#ee8a30' },
  { id: '3', a: unit, b: '1.客厅', ratio: '27.9%', color: '#35dc45' },
];
const blankRows = Array.from({ length: 8 }, (_, i) => i);

const toggles: [string, boolean][] = [['捕捉', false], ['栅格', false], ['正交', false], ['极轴', false], ['对象捕捉', true], ['对象追踪', false], ['DUCS', true], ['DYN', false], ['线宽', false], ['模型', true]];
const trayIcons = ['t1', 't2', 't3', 't4', 't5', 't6', 't7', 't8', 't9', 't10', 't11', 't12'];

const Dots = () => (
  <svg width="4" height="17" aria-hidden="true">
    <path d="M1 1v16M3 3v13" stroke="#1a3f9e" strokeDasharray="2 2" />
  </svg>
);

const IconDock = ({ names }: { names: string[] }) => (
  <Dock>
    <DockList>
      {names.map(n => <button key={n} aria-label={n}><Icon name={n} size={13} /></button>)}
    </DockList>
  </Dock>
);

export default function App() {
  return (
    <Page>
      <GlobalStyle />
      <AppBar>
        <Icon name="cad" />
        <BarTitle>AutoCAD 2007</BarTitle>
        <WindowControls restore />
      </AppBar>

      <MenuBar>
        {menus.map(([name, key]) => (
          <MenuItem key={name}>{name}{key && <>(<u>{key}</u>)</>}</MenuItem>
        ))}
      </MenuBar>

      <ToolRow>
        <Toolbar><Tools names={standard} /></Toolbar>
        <Toolbar $gap={4}>
          <StyleField>
            <ToolButton aria-label="文字样式管理"><Icon name="textStyle" /></ToolButton>
            <Drop label="文字样式" value="HZS" w={75} />
          </StyleField>
          <StyleField>
            <ToolButton aria-label="标注样式管理"><Icon name="dimStyle" /></ToolButton>
            <Drop label="标注样式" value="STANDARD" w={75} />
          </StyleField>
          <StyleField>
            <ToolButton aria-label="表格样式管理"><Icon name="tableStyle" /></ToolButton>
            <Drop label="表格样式" value="Standard" w={75} />
          </StyleField>
        </Toolbar>
      </ToolRow>

      <ToolRow>
        <Toolbar>
          <Drop label="工作空间" value="AutoCAD 经典" w={130} pad={5} />
          <Tools names={['gear', 'myspace']} />
        </Toolbar>
        <Toolbar>
          <Tools names={['layers']} />
          <Drop
            label="图层" value="0" w={225} pad={64}
            art={<><Icon name="bulb" /><Icon name="sun" size={12} /><Icon name="freeze" /><Icon name="lock" size={12} /><Swatch /></>}
          />
          <Tools names={['layerPrev', 'layerState']} />
        </Toolbar>
        <Toolbar $gap={4}>
          <Drop label="颜色" value="ByLayer" w={114} pad={14} art={<Swatch />} />
          <Drop label="线型" value="ByLayer" w={121} pad={51} art={<Stroke $w={45} />} />
          <Drop label="线宽" value="ByLayer" w={94} pad={32} art={<Stroke $w={26} />} />
          <Drop label="打印样式" value="随颜色" w={93} pad={6} off />
        </Toolbar>
      </ToolRow>

      <WorkArea>
        <IconDock names={drawTools} />
        <MdiHost>
          <MdiWindow>
            <MdiBar>
              <Icon name="dwg" size={12} />
              <BarTitle as="h2">E:\原始文件.dwg</BarTitle>
              <WindowControls />
            </MdiBar>
            <Drawing />
          </MdiWindow>
        </MdiHost>
        <IconDock names={modifyTools} />
      </WorkArea>

      <CommandArea>
        <CommandGrip />
        <CommandBox>
          <History>
            <span>选择对象:</span>
            <Scroll>
              <ScrollButton aria-label="向上滚动"><Chevron d={UP} /></ScrollButton>
              <ScrollButton aria-label="向下滚动"><Chevron d={DOWN} /></ScrollButton>
            </Scroll>
          </History>
          <Prompt>
            <label htmlFor="command">命令:</label>
            <input id="command" />
            <Scroll $row>
              <ScrollButton aria-label="向左滚动"><Chevron d={LEFT} /></ScrollButton>
              <ScrollButton aria-label="滚动条"><svg width="6" height="5"><path d="M1 0v5M3 0v5M5 0v5" stroke="#9db5ee" /></svg></ScrollButton>
              <ScrollButton $end aria-label="向右滚动"><Chevron d={RIGHT} /></ScrollButton>
            </Scroll>
          </Prompt>
        </CommandBox>
      </CommandArea>

      <ResultPanel>
        <ClosePanel aria-label="关闭面板">
          <svg width="8" height="7"><path d="m1 1 5 5M6 1 1 6M7.500 0v7" stroke="#222" strokeWidth="1.200" /></svg>
        </ClosePanel>
        <ListBox>
          <Table>
            <colgroup>
              <col width="76" /><col width="263" /><col width="262" /><col width="75" /><col />
            </colgroup>
            <thead>
              <tr><th>ID</th><th>文字1</th><th>文字2</th><th>重叠比例</th><th /></tr>
            </thead>
            <tbody>
              {results.map(r => (
                <ResultRow key={r.id} $color={r.color}>
                  <td>{r.id}</td><td>{r.a}</td><td>{r.b}</td><td>{r.ratio}</td><td />
                </ResultRow>
              ))}
              {blankRows.map(i => (
                <ResultRow key={i}><td>{'\u00a0'}</td><td /><td /><td /><td /></ResultRow>
              ))}
            </tbody>
          </Table>
        </ListBox>
      </ResultPanel>

      <StatusBar>
        <Coordinates>-34983.9966, 353680.2347, 0.0000</Coordinates>
        {toggles.map(([name, on]) => <Toggle key={name} $on={on} aria-pressed={on}>{name}</Toggle>)}
        <StatusTray>
          <button aria-label="通讯中心"><Icon name="dish" size={12} /></button>
          <button aria-label="锁定"><Icon name="padlock" size={12} /></button>
          <button aria-label="打印状态"><Icon name="plotOk" size={12} /></button>
          <button aria-label="状态栏菜单"><Icon name="caret" /></button>
          <button aria-label="全屏"><Icon name="clean" size={12} /></button>
        </StatusTray>
      </StatusBar>

      <Taskbar>
        <StartButton><Icon name="flag" size={14} />开始</StartButton>
        <QuickLaunch><Icon name="quick" size={16} /><Dots /></QuickLaunch>
        <TaskButton><Icon name="ie" size={12} />撰写新文章 ‹ CAD...</TaskButton>
        <TaskButton><Icon name="folder" size={12} />打包区</TaskButton>
        <TaskButton $active><Icon name="cad" size={12} />AutoCAD 2007</TaskButton>
        <Language><Dots />CH<Dots /><Icon name="usb" size={12} /></Language>
        <Tray>
          <TrayIcons>
            {trayIcons.map(n => <button key={n} aria-label={n}><Icon name={n} size={13} /></button>)}
          </TrayIcons>
          <Clock>{'22:27 周四\n2013-09-19'}</Clock>
        </Tray>
      </Taskbar>

      <ThunderBadge href="#thunder">
        <svg width="17" height="18" viewBox="0 0 17 18" aria-hidden="true">
          <rect width="17" height="18" rx="2" fill="#164f94" />
          <path d="M2 6c4 1 6 2 8 1l4-4-1 5 3 1-4 2c-1 4-5 5-8 4 3-1 3-3 2-5-2 0-3-2-4-4z" fill="#eaf5ff" />
        </svg>
        <span>迅雷7</span>
      </ThunderBadge>

      <NetMonitor>
        <Gauge>39%</Gauge>
        <Speeds>
          <div><svg width="5" height="8"><path d="M2.500 8V2M0 4l2.500-3L5 4z" fill="#e8682a" stroke="#e8682a" /></svg>8.8K/S</div>
          <div><svg width="5" height="8"><path d="M2.500 0v6M0 4l2.500 3L5 4z" fill="#2f9a3a" stroke="#2f9a3a" /></svg>0.2K/S</div>
        </Speeds>
      </NetMonitor>
    </Page>
  );
}
